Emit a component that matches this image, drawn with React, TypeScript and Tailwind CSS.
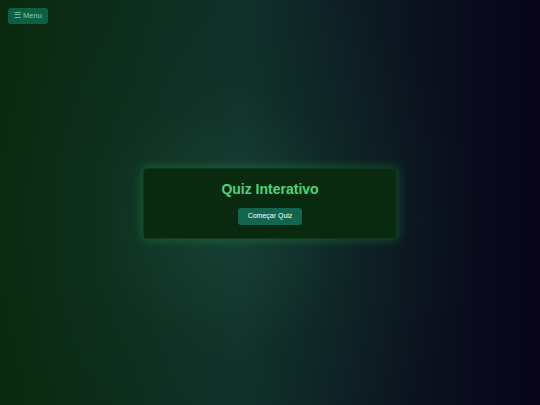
export default function App() {
  return (
    <div className="relative h-[405px] w-[540px] overflow-hidden bg-[linear-gradient(90deg,#0a2a0e_0%,#10302a_45%,#0c1420_75%,#07041a_100%)] font-['Liberation_Sans',Arial,sans-serif]">
      <div className="absolute inset-0 bg-[radial-gradient(circle_at_42%_55%,rgba(34,90,70,0.4)_0%,rgba(20,60,45,0.18)_35%,rgba(0,0,0,0)_65%)]" />
      <button className="absolute left-2 top-2 z-10 flex h-4 items-center rounded-[3px] bg-[#0f5f45] px-[6px] text-[7.5px] text-[#7fd6a8]">
        ☰ Menu
      </button>
      <div className="relative flex h-full items-center justify-center">
        <div className="mt-[1px] flex h-[71px] w-[254px] flex-col items-center justify-center rounded-[4px] border border-[#0f3a1a] bg-[#0a2a10] shadow-[0_0_10px_2px_rgba(40,200,90,0.25)]">
          <h1 className="mt-[1px] text-[14px] font-bold leading-none text-[#4ed47e]">Quiz Interativo</h1>
          <button className="mt-[12px] h-[17px] rounded-[3px] bg-[#11664d] px-[10px] text-[7px] text-white">
            Começar Quiz
          </button>
        </div>
      </div>
    </div>
  );
}
